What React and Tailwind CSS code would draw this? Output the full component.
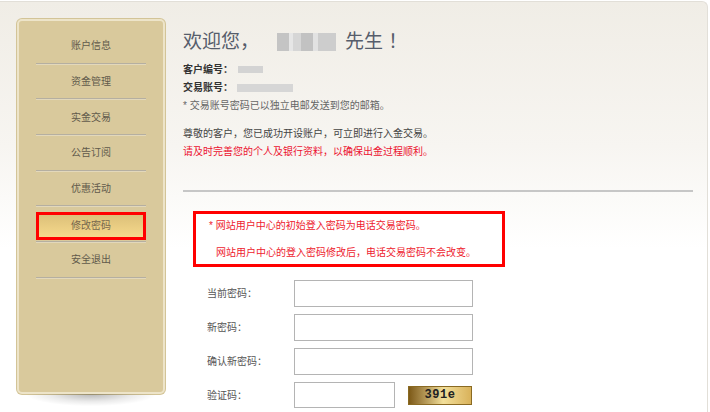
import React from 'react';

const menuItems = ['账户信息', '资金管理', '实金交易', '公告订阅', '优惠活动', '修改密码', '安全退出'];
const activeItem = '修改密码';

const fields = [
    { label: '当前密码：', id: 'oldPwd' },
    { label: '新密码：', id: 'newPwd' },
    { label: '确认新密码：', id: 'confirmPwd' },
];

function Sidebar() {
    return (
        <div className="flex flex-col ml-[17px] mt-[17px] w-[148px] shrink-0">
            <div className="h-[375px] rounded-[5px] border-2 border-[#ede4c9] bg-[#d9c99c] shadow-[0_0_0_1px_#d3c497] pt-[8px]">
                {menuItems.map(item => (
                    <div key={item}>
                        <div className="h-[33.7px] flex items-center mx-[17px]">
                            {item === activeItem ? (
                                <div className="w-[112px] h-[28px] mt-[3px] border-[3px] border-[#ff0000] bg-linear-to-b from-[#dcc079] to-[#f6d98c] flex items-center justify-center text-[10px] text-[#76674d]">
                                    {item}
                                </div>
                            ) : (
                                <div className="w-full text-center text-[10px] text-[#615a4b]">{item}</div>
                            )}
                        </div>
                        <div className="mx-[17px] h-px bg-[#b5afa1]"></div>
                        <div className="mx-[17px] h-px bg-[#e3d8bb]"></div>
                    </div>
                ))}
            </div>
            <div className="h-[12px] mx-[10px] bg-[radial-gradient(ellipse_at_top,rgba(0,0,0,0.28),rgba(0,0,0,0.08)_45%,transparent_72%)]"></div>
        </div>
    );
}

function BlurName() {
    return (
        <div className="flex ml-[18px] mr-[9px] h-[18px] w-[59px] blur-[0.6px]">
            <div className="w-[12px] bg-[#c4c4c4]"></div>
            <div className="w-[4px] bg-[#e6e6e6]"></div>
            <div className="w-[8px] bg-[#d6d6d6]"></div>
            <div className="w-[12px] bg-[#c2c2c2]"></div>
            <div className="w-[5px] bg-[#e2e2e2]"></div>
            <div className="w-[18px] bg-[#cdcdcd]"></div>
        </div>
    );
}

function Content() {
    return (
        <div className="flex flex-col ml-[18px] w-[510px] pt-[30px]">
            <div className="flex items-center h-[20px] text-[19px] leading-[20px] text-[#565d6b]">
                <span>欢迎您，</span>
                <BlurName />
                <span>先生 ！</span>
            </div>
            <div className="mt-[8.5px] flex items-center h-[18px] text-[10px] font-bold text-[#333]">
                客户编号：
                <span className="ml-[5px] w-[25px] h-[7px] bg-[#d3d3d3] blur-[0.5px]"></span>
            </div>
            <div className="flex items-center h-[18px] text-[10px] font-bold text-[#333]">
                交易账号：
                <span className="ml-[4px] w-[56px] h-[8px] bg-[#d6d6d6] blur-[0.5px]"></span>
            </div>
            <div className="h-[18px] leading-[18px] text-[10px] text-[#666]">* 交易账号密码已以独立电邮发送到您的邮箱。</div>
            <div className="mt-[10.5px] h-[18px] leading-[18px] text-[10px] text-[#444]">尊敬的客户，您已成功开设账户，可立即进行入金交易。</div>
            <div className="h-[18px] leading-[18px] text-[10px] text-[#ec1230]">请及时完善您的个人及银行资料，以确保出金过程顺利。</div>
            <div className="mt-[29px] h-[2px] w-[510px] bg-[#c6c6c6]"></div>

            <div className="mt-[19px] ml-[10px] w-[312px] h-[56px] border-[3px] border-[#ff0000] flex flex-col text-[10px] text-[#ee1b2e] bg-white">
                <div className="mt-[3px] pl-[13px] h-[18px] leading-[18px]">* 网站用户中心的初始登入密码为电话交易密码。</div>
                <div className="mt-[9px] pl-[20px] h-[18px] leading-[18px]">网站用户中心的登入密码修改后，电话交易密码不会改变。</div>
            </div>

            <div className="mt-[13px] flex flex-col gap-[7px]">
                {fields.map(f => (
                    <div key={f.id} className="flex items-center">
                        <label htmlFor={f.id} className="ml-[24px] w-[87px] text-[10px] text-[#555]">{f.label}</label>
                        <input id={f.id} type="password" className="w-[179px] h-[27px] border border-[#b4b4b4] bg-white outline-none" />
                    </div>
                ))}
                <div className="flex items-center">
                    <label htmlFor="captcha" className="ml-[24px] w-[87px] text-[10px] text-[#555]">验证码：</label>
                    <input id="captcha" type="text" className="w-[101px] h-[26px] border border-[#b4b4b4] bg-white outline-none" />
                    <div className="ml-[13px] w-[64px] h-[19px] border border-[#8a6a22] bg-linear-to-r from-[#7d5a16] via-[#f2df9a] via-55% to-[#d9b25a] flex items-center justify-center font-['Liberation_Mono',monospace] font-bold text-[12px] text-[#222] tracking-[0.5px]">
                        391e
                    </div>
                </div>
            </div>
        </div>
    );
}

export default function App() {
    return (
        <div className="w-[710px] h-[412px] overflow-hidden bg-white font-['Liberation_Sans','Noto_Sans_CJK_SC',sans-serif]">
            <div className="w-[708px] h-[412px] mt-px border-t border-r border-[#e2dfd8] rounded-tr-[6px] bg-linear-to-b from-[#f0ede6] via-[#f7f5f1] via-35% to-white to-60% flex">
                <Sidebar />
                <Content />
            </div>
        </div>
    );
}
